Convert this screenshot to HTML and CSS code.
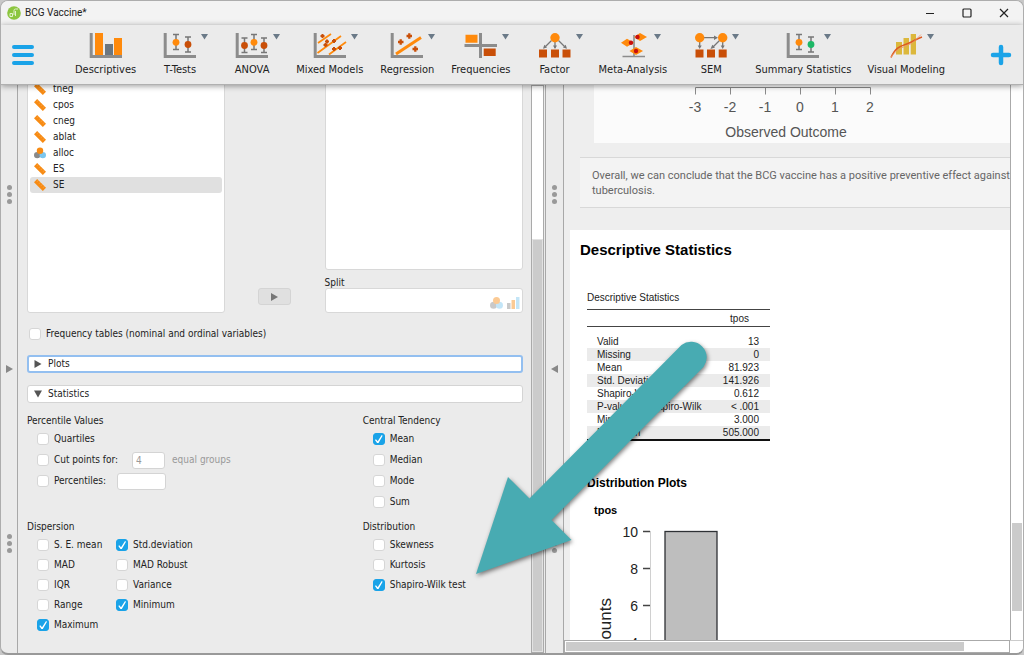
FILE: index.html
```html
<!DOCTYPE html>
<html lang="en">
<head>
<meta charset="utf-8">
<title>BCG Vaccine*</title>
<link rel="stylesheet" href="styles.css">
</head>
<body>
<svg class="defs" aria-hidden="true">
  <symbol id="drop" viewBox="0 0 56 26"><path d="M49 1h7l-3.500 5.500z" fill="#6b7a88"/></symbol>
  <symbol id="axes" viewBox="0 0 56 26"><path d="M13.200 0v23.500H44" fill="none" stroke="#8c8c8c" stroke-width="3"/></symbol>
  <symbol id="ruler" viewBox="0 0 12 12"><path d="M3.200 0L12 8.800 8.800 12 0 3.200z" fill="#f78b14"/><path d="M4.500 1.300L3.300 2.500M6.500 3.300L5.300 4.500M8.500 5.300L7.300 6.500M10.500 7.300L9.300 8.500" stroke="#ffc27a" stroke-width=".7"/></symbol>
  <symbol id="nominal" viewBox="0 0 13 12"><circle cx="3.500" cy="8.300" r="3.500" fill="#8a8a8a"/><circle cx="9.500" cy="8.300" r="3.500" fill="#7cc6ee"/><circle cx="6.500" cy="3.500" r="3.500" fill="#f78b14"/></symbol>
  <symbol id="ordinal" viewBox="0 0 13 12"><path d="M0 6h3.500v6H0z" fill="#8a8a8a"/><path d="M4.500 3H8v9H4.500z" fill="#f78b14"/><path d="M9 0h3.500v12H9z" fill="#7cc6ee"/></symbol>
</svg>
<div class="window">
  <header class="titlebar">
    <svg class="logo" viewBox="0 0 14 14" aria-hidden="true"><circle cx="7" cy="7" r="6.800" fill="#8cc63f"/><path d="M7 9V4.500q0-1.500 1.500-1.500H11M3 7.500h2.500v3H3zM8.500 5v5" fill="none" stroke="#e3f3cd" stroke-width="1"/></svg>
    <h1 class="title">BCG Vaccine*</h1>
    <div class="controls">
      <button aria-label="Minimize"><svg viewBox="0 0 10 10"><path d="M1 5.500h8"/></svg></button>
      <button aria-label="Maximize"><svg viewBox="0 0 10 10"><rect x="1" y="1" width="8" height="8" rx="1"/></svg></button>
      <button aria-label="Close"><svg viewBox="0 0 10 10"><path d="M1 1l8 8M9 1l-8 8"/></svg></button>
    </div>
  </header>
  <nav class="ribbon">
    <button class="menu" aria-label="Menu"><svg viewBox="0 0 22 22"><path d="M2 3h18M2 11h18M2 19h18" stroke="#1aa3e8" stroke-width="4" stroke-linecap="round"/></svg></button>
    <div class="modules">
      <button class="module"><svg viewBox="0 0 56 26"><use href="#axes"/><path d="M17 0h8v22h-8zM36 5h8v17h-8z" fill="#ff8a0c"/><path d="M27 11h8v11h-8z" fill="#6b7680"/></svg><span>Descriptives</span></button>
      <button class="module"><svg viewBox="0 0 56 26"><use href="#axes"/><use href="#drop"/><path d="M21 1.500h6M24 1.500v15M21 16.500h6M33 4h6M36 4v15M33 19h6" stroke="#777" stroke-width="1.500"/><circle cx="24" cy="9.300" r="3.400" fill="#ff8a0c"/><circle cx="36" cy="11.500" r="3.400" fill="#c94f08"/></svg><span>T-Tests</span></button>
      <button class="module"><svg viewBox="0 0 56 26"><use href="#axes"/><use href="#drop"/><path d="M17.500 5h6M20.500 5v14.500M17.500 19.500h6M27 1.500h6M30 1.500v15M27 16.500h6M37 5h6M40 5v14.500M37 19.500h6" stroke="#777" stroke-width="1.500"/><circle cx="20.500" cy="12.500" r="3.400" fill="#c94f08"/><circle cx="30" cy="9.300" r="3.400" fill="#ff8a0c"/><circle cx="40" cy="12.500" r="3.400" fill="#c94f08"/></svg><span>ANOVA</span></button>
      <button class="module"><svg viewBox="0 0 56 26"><use href="#axes"/><use href="#drop"/><path d="M16 10L29 1M15.500 20L39 3M27 21.500L44 9" stroke="#ff8a0c" stroke-width="1.800"/><path d="M18.500 3h4M20.500 1v4M23 8.500h4M25 6.500v4M30 8h4M32 6v4M21.500 12h4M23.500 10v4M30 16h4M32 14v4M36 15h4M38 13v4" stroke="#c94f08" stroke-width="2"/></svg><span>Mixed Models</span></button>
      <button class="module"><svg viewBox="0 0 56 26"><use href="#axes"/><use href="#drop"/><path d="M17 21L42 4.500" stroke="#ff8a0c" stroke-width="3"/><path d="M19 9h5.500M21.700 6.300v5.500M27.500 3H33M30.300.3v5.500M33.500 16H39M36.300 13.300v5.500" stroke="#c94f08" stroke-width="2.300"/></svg><span>Regression</span></button>
      <button class="module"><svg viewBox="0 0 56 26"><use href="#drop"/><path d="M27.500 0v25M11.500 12.500h32.500" stroke="#8c8c8c" stroke-width="3"/><path d="M12.500 1.700h12v8h-12z" fill="#ff8a0c"/><path d="M30.700 15.500h12v7.500h-12z" fill="#c94f08"/></svg><span>Frequencies</span></button>
      <button class="module"><svg viewBox="0 0 56 26"><use href="#drop"/><path d="M28 9v6M24.500 7.500l-6 6M31.500 7.500l6 6" stroke="#777" stroke-width="1.300"/><path d="M26 12.500h4l-2 3.500zM16 15.800l1.300-4 2.700 2.700zM40 15.800l-1.300-4-2.700 2.700z" fill="#777"/><circle cx="28" cy="4.700" r="4.700" fill="#ff8a0c"/><path d="M12 16.500h8v8h-8zM24 16.500h8v8h-8zM35.500 16.500h8v8h-8z" fill="#c94f08"/></svg><span>Factor</span></button>
      <button class="module"><svg viewBox="0 0 56 26"><use href="#drop"/><path d="M29 2v21M17.500 23.500H40" stroke="#8c8c8c" stroke-width="1.600"/><path d="M29 4l6-4 7 4-7 4zM16 9.700l6-4 7 4-7 4zM24.500 18l6.500-4 7 4-7 4z" fill="#ff8a0c"/><circle cx="32.500" cy="4" r="2.200" fill="#c80f0f"/><circle cx="26" cy="9.700" r="2.200" fill="#c80f0f"/><circle cx="31" cy="18" r="2.200" fill="#c80f0f"/></svg><span>Meta-Analysis</span></button>
      <button class="module"><svg viewBox="0 0 56 26"><use href="#drop"/><path d="M21 4.700h11M16.700 9v4M39.700 9v4M36.500 7.500L30 14" stroke="#777" stroke-width="1.300"/><path d="M31 2.500l4 2.200-4 2.200zM14.700 12.500h4l-2 3.500zM37.700 12.500h4l-2 3.500zM27.500 16l1.800-4.200 2.700 2.700z" fill="#777"/><circle cx="16.700" cy="4.700" r="4.700" fill="#ff8a0c"/><circle cx="39.700" cy="4.700" r="4.700" fill="#ff8a0c"/><path d="M12.500 16.500h8v8h-8zM24 16.500h8v8h-8zM35.700 16.500h8v8h-8z" fill="#c94f08"/></svg><span>SEM</span></button>
      <button class="module"><svg viewBox="0 0 56 26"><use href="#axes"/><use href="#drop"/><path d="M21 1.500h6M24 1.500v15M21 16.500h6M33 4h6M36 4v15M33 19h6" stroke="#777" stroke-width="1.500"/><circle cx="24" cy="9.300" r="3.400" fill="#ff8a0c"/><circle cx="36" cy="11.500" r="3.400" fill="#1db866"/></svg><span>Summary Statistics</span></button>
      <button class="module"><svg viewBox="0 0 56 26"><use href="#drop"/><path d="M18 9h6v12.500h-6zM25.500 5H31v16.500h-5.500zM32.700 1H38v20.500h-5.300z" fill="#dcb83c"/><path d="M13 24.500C18 13 24 13 30 10.500S38 6 44 4" fill="none" stroke="#dd5a22" stroke-width="1.500"/><path d="M13 24C20 14 28 14 35 9.500L43 1.500" fill="none" stroke="#ee9a6a" stroke-width=".8"/></svg><span>Visual Modeling</span></button>
    </div>
    <button class="menu" aria-label="Add module"><svg viewBox="0 0 22 22"><path d="M3 11h16M11 3v16" stroke="#1aa3e8" stroke-width="4.500" stroke-linecap="round"/></svg></button>
  </nav>

  <main class="work">
    <div class="gutter">
      <span class="dots dots-top"><i></i><i></i><i></i></span>
      <svg class="fold" viewBox="0 0 7 8"><path d="M0 0l7 4-7 4z"/></svg>
      <span class="dots dots-low"><i></i><i></i><i></i></span>
    </div>

    <form class="form">
      <div class="variables">
        <ul class="list source">
          <li><svg><use href="#ruler"/></svg>tneg</li>
          <li><svg><use href="#ruler"/></svg>cpos</li>
          <li><svg><use href="#ruler"/></svg>cneg</li>
          <li><svg><use href="#ruler"/></svg>ablat</li>
          <li><svg><use href="#nominal"/></svg>alloc</li>
          <li><svg><use href="#ruler"/></svg>ES</li>
          <li class="selected"><svg><use href="#ruler"/></svg>SE</li>
        </ul>
        <div class="transfer"><button type="button" aria-label="Move to Split"><svg viewBox="0 0 7 8"><path d="M0 0l7 4-7 4z"/></svg></button></div>
        <div class="targets">
          <div class="list target"></div>
          <span class="split-label">Split</span>
          <div class="list split"><svg><use href="#nominal"/></svg><svg><use href="#ordinal"/></svg></div>
        </div>
      </div>
      <label class="check frequency"><input type="checkbox">Frequency tables (nominal and ordinal variables)</label>
      <button type="button" class="section focused"><svg viewBox="0 0 8 8"><path d="M0.500 0l7 4-7 4z"/></svg>Plots</button>
      <button type="button" class="section"><svg viewBox="0 0 8 8"><path d="M0 0.500h8l-4 7z"/></svg>Statistics</button>
      <div class="statistics">
        <section class="group upper">
          <h2>Percentile Values</h2>
          <div class="rows">
            <label class="check"><input type="checkbox">Quartiles</label>
            <div class="row"><label class="check"><input type="checkbox">Cut points for:</label><input class="field short" type="text" value="4" aria-label="Number of groups" disabled><span class="muted">equal groups</span></div>
            <div class="row"><label class="check"><input type="checkbox">Percentiles:</label><input class="field" type="text" aria-label="Percentiles"></div>
          </div>
        </section>
        <section class="group upper">
          <h2>Central Tendency</h2>
          <div class="rows">
            <label class="check"><input type="checkbox" checked>Mean</label>
            <label class="check"><input type="checkbox">Median</label>
            <label class="check"><input type="checkbox">Mode</label>
            <label class="check"><input type="checkbox">Sum</label>
          </div>
        </section>
        <section class="group">
          <h2>Dispersion</h2>
          <div class="rows pairs">
            <label class="check"><input type="checkbox">S. E. mean</label>
            <label class="check"><input type="checkbox" checked>Std.deviation</label>
            <label class="check"><input type="checkbox">MAD</label>
            <label class="check"><input type="checkbox">MAD Robust</label>
            <label class="check"><input type="checkbox">IQR</label>
            <label class="check"><input type="checkbox">Variance</label>
            <label class="check"><input type="checkbox">Range</label>
            <label class="check"><input type="checkbox" checked>Minimum</label>
            <label class="check"><input type="checkbox" checked>Maximum</label>
          </div>
        </section>
        <section class="group">
          <h2>Distribution</h2>
          <div class="rows">
            <label class="check"><input type="checkbox">Skewness</label>
            <label class="check"><input type="checkbox">Kurtosis</label>
            <label class="check"><input type="checkbox" checked>Shapiro-Wilk test</label>
          </div>
        </section>
      </div>
    </form>
    <div class="scroll form-scroll"><div class="thumb"></div></div>

    <div class="gutter middle">
      <span class="dots dots-top"><i></i><i></i><i></i></span>
      <svg class="fold" viewBox="0 0 7 8"><path d="M7 0L0 4l7 4z"/></svg>
      <span class="dots dots-low"><i></i><i></i><i></i></span>
    </div>

    <div class="results-frame">
      <article class="results">
        <div class="forest">
          <svg viewBox="0 0 417 58">
            <path d="M101.500 2.500h175M101.500 2.500v7M136.500 2.500v7M171.500 2.500v7M206.500 2.500v7M241.500 2.500v7M276.500 2.500v7" fill="none" stroke="#8a8a8a"/>
            <g text-anchor="middle"><text x="101" y="27">-3</text><text x="136" y="27">-2</text><text x="171" y="27">-1</text><text x="206" y="27">0</text><text x="241" y="27">1</text><text x="276" y="27">2</text><text x="192" y="52">Observed Outcome</text></g>
          </svg>
        </div>
        <p class="note">Overall, we can conclude that the BCG vaccine has a positive preventive effect against tuberculosis.</p>
        <section class="card">
          <h2>Descriptive Statistics</h2>
          <table>
            <caption>Descriptive Statistics</caption>
            <thead><tr><th></th><th scope="col">tpos</th></tr></thead>
            <tbody>
              <tr class="spacer"><td></td><td></td></tr>
              <tr><td>Valid</td><td>13</td></tr>
              <tr class="band"><td>Missing</td><td>0</td></tr>
              <tr><td>Mean</td><td>81.923</td></tr>
              <tr class="band"><td>Std. Deviation</td><td>141.926</td></tr>
              <tr><td>Shapiro-Wilk</td><td>0.612</td></tr>
              <tr class="band"><td>P-value of Shapiro-Wilk</td><td>&lt; .001</td></tr>
              <tr><td>Minimum</td><td>3.000</td></tr>
              <tr class="band"><td>Maximum</td><td>505.000</td></tr>
            </tbody>
          </table>
          <h3>Distribution Plots</h3>
          <h4>tpos</h4>
          <svg class="histogram" viewBox="0 0 180 140">
            <path d="M63.500 11v129" stroke="#d0d0d0"/>
            <path d="M56 11.500h7M56 48.500h7M56 85.500h7M56 122.500h7" stroke="#444" stroke-width="1.500"/>
            <rect x="78" y="11.500" width="52" height="150" fill="#bebebe" stroke="#2e3135" stroke-width="1.300"/>
            <g text-anchor="end"><text x="51" y="17">10</text><text x="51" y="54">8</text><text x="51" y="91">6</text><text x="51" y="128">4</text></g>
            <text class="axis-title" text-anchor="end" transform="translate(24 78) rotate(-90)">Counts</text>
          </svg>
        </section>
      </article>
      <div class="scroll vertical"><div class="thumb"></div></div>
      <div class="scroll horizontal"><div class="thumb"></div></div>
      <div class="corner"></div>
    </div>
  </main>
  <svg class="pointer" viewBox="0 0 240 240" aria-hidden="true"><path d="M6 234L38 137 59.500 158.500 211.500 5A15.700 15.700 0 0 1 233.500 27L81.500 180 101.500 200z" fill="#48abb2"/></svg>
</div>
</body>
</html>
```
FILE: styles.css
```css
* { box-sizing: border-box; }
html { background: #c8c8c8; }
body {
  margin: 0;
  font: 10px/14px "DejaVu Sans Condensed", "DejaVu Sans", sans-serif;
  color: #222;
}
h1, h2, h3, h4, p, ul { margin: 0; padding: 0; }
button { font: inherit; color: inherit; border: 0; padding: 0; background: none; }
svg { display: block; overflow: visible; }
.defs { position: absolute; width: 0; height: 0; }

.window {
  position: relative;
  display: flex;
  flex-direction: column;
  height: 100vh;
  border: 1px solid #adadad;
  border-bottom: 2px solid #999;
  border-radius: 8px;
  overflow: hidden;
  background: #ebebeb;
}

.titlebar {
  display: flex;
  align-items: center;
  flex: none;
  height: 24px;
  padding: 0 14px 0 6px;
  background: #f3f3f3;
}
.logo { width: 14px; height: 14px; }
.title { margin-left: 4px; font: 10px/14px Roboto, sans-serif; color: #222; }
.controls { display: flex; gap: 27px; margin-left: auto; }
.controls svg { width: 10px; height: 10px; fill: none; stroke: #222; stroke-width: 1.2; }

.ribbon {
  position: relative;
  z-index: 2;
  display: flex;
  align-items: center;
  flex: none;
  height: 60px;
  padding: 0 11px;
  border-bottom: 1px solid #b0b0b0;
  box-shadow: 0 1px 6px rgba(0, 0, 0, 0.4);
  background: #ebebeb;
}
.menu svg { width: 22px; height: 22px; }
.modules { display: flex; flex: 1; gap: 16px; margin-left: 41px; }
.module {
  display: flex;
  flex-direction: column;
  align-items: center;
  gap: 4px;
  min-width: 56px;
  font-size: 11px;
  white-space: nowrap;
}
.module svg { width: 56px; height: 26px; }

.work { display: flex; flex: 1; min-height: 0; }
.gutter {
  display: flex;
  flex-direction: column;
  align-items: center;
  flex: none;
  width: 17px;
  border-right: 1px solid #a8a8a8;
}
.middle { width: 19px; border-left: 1px solid #a8a8a8; margin-left: 1px; }
.dots { display: flex; flex-direction: column; gap: 2px; }
.dots i { width: 5px; height: 5px; border-radius: 50%; background: #999; }
.dots-top { margin-top: 100px; }
.fold { width: 7px; height: 8px; margin: 161px 0; fill: #888; }

.form { flex: 496; min-width: 0; padding: 0 8px 0 9px; overflow: hidden; }
.variables { display: grid; grid-template-columns: 2fr 1fr 2fr; height: 228px; }
.list {
  border: 1px solid #d8d8d8;
  border-radius: 3px;
  background: #fff;
  list-style: none;
}
.source { margin-top: -5px; padding: 0 2px; }
.source li { display: flex; align-items: center; gap: 7px; height: 16px; padding-left: 4px; line-height: 16px; }
.source svg { width: 12px; height: 12px; }
.source .selected { border-radius: 3px; background: #e0e0e0; }
.transfer { display: flex; align-items: flex-end; justify-content: center; padding-bottom: 8px; }
.transfer button {
  display: grid;
  place-items: center;
  width: 33px;
  height: 17px;
  border: 1px solid #d4d4d4;
  border-radius: 3px;
  background: #e0e0e0;
}
.transfer svg { width: 7px; height: 8px; fill: #777; }
.targets { display: flex; flex-direction: column; }
.target { flex: 1; margin-top: -5px; }
.split-label { padding-top: 8px; line-height: 10px; }
.split {
  display: flex;
  align-items: center;
  justify-content: flex-end;
  gap: 4px;
  height: 25px;
  padding: 4px 2px 0;
}
.split svg { width: 13px; height: 12px; opacity: 0.45; }

.check { display: flex; align-items: center; gap: 5px; white-space: nowrap; }
.check input {
  appearance: none;
  display: grid;
  place-items: center;
  flex: none;
  width: 12px;
  height: 12px;
  margin: 0;
  border: 1px solid #d6d6d6;
  border-radius: 3px;
  background: #fff;
}
.check input:checked { border-color: #1aa3e8; background: #1aa3e8; }
.check input:checked::after {
  content: "";
  width: 8px;
  height: 8px;
  background: #fff;
  clip-path: polygon(88% 0, 100% 8%, 48% 100%, 30% 100%, 4% 62%, 16% 52%, 38% 78%);
}
.frequency { margin: 14px 0 14px 2px; }

.section {
  display: flex;
  align-items: center;
  gap: 6px;
  width: 100%;
  height: 18px;
  padding: 0 6px;
  border: 1px solid #d4d4d4;
  border-radius: 3px;
  background: #fff;
}
.section svg { width: 8px; height: 8px; fill: #555; }
.section.focused { margin-bottom: 12px; padding: 0 5px; border: 2px solid #93bff0; }

.statistics { display: grid; grid-template-columns: 335fr 160fr; padding-top: 11px; }
.group h2 { font: inherit; line-height: 14px; }
.upper { min-height: 106px; }
.rows { display: grid; gap: 6px; margin-top: 4px; padding-left: 10px; }
.upper .rows { gap: 7px; }
.rows .check, .row { height: 14px; }
.row { display: flex; align-items: center; }
.pairs { grid-template-columns: 73px auto; justify-content: start; column-gap: 6px; }
.field {
  width: 49px;
  height: 17px;
  margin-left: 11px;
  padding: 0 3px;
  border: 1px solid #d4d4d4;
  border-radius: 3px;
  background: #fff;
  font: inherit;
}
.short { width: 33px; margin-left: 14px; color: #999; }
.muted { margin-left: 7px; color: #999; }

.scroll { border: 1px solid #aaa; background: #fff; }
.thumb { background: #cbcbcb; }
.form-scroll { display: flex; flex: none; align-items: flex-end; width: 13px; }
.form-scroll .thumb { width: 100%; height: 73%; border: 1px solid #e2e2e2; }

.results-frame {
  display: grid;
  flex: 459;
  min-width: 0;
  grid-template-columns: minmax(0, 1fr) 13px;
  grid-template-rows: minmax(0, 1fr) 13px;
}
.results {
  overflow: hidden;
  background: #eee;
  font-family: "Liberation Sans", Arial, sans-serif;
}
.forest { margin-left: 30px; background: #fbfbfb; }
.forest svg { width: 417px; height: 58px; font-size: 14px; fill: #555; }
.note {
  margin: 14px 0 22px 16px;
  padding: 10px 0 9px 12px;
  border: solid #d8d8d8;
  border-width: 1px 0;
  background: #f3f3f3;
  color: #666;
  font-family: Roboto, sans-serif;
  font-size: 11px;
  line-height: 15px;
}
.card { margin-left: 6px; padding: 10px 10px 0; background: #fff; color: #222; }
.card h2 { font-size: 15px; line-height: 20px; color: #000; }
.card table { width: 183px; margin: 31px 0 0 7px; border-collapse: collapse; border-bottom: 2px solid #111; line-height: 13px; }
.card caption { padding-bottom: 5px; text-align: left; line-height: 13px; }
.card thead { border: solid #444; border-width: 1px 0; }
.card th { height: 17px; padding: 0 21px 0 0; font-weight: normal; text-align: right; }
.card td { padding: 0 11px 0 10px; white-space: nowrap; }
.card td:last-child { padding-left: 0; text-align: right; }
.card .spacer td { height: 8px; }
.card .band { background: #ebebeb; }
.card h3 { margin: 35px 0 0 7px; font-size: 12px; line-height: 15px; color: #000; }
.card h4 { margin: 12px 0 0 14px; font-size: 11px; line-height: 15px; color: #000; }
.histogram { width: 180px; height: 140px; margin: 2px 0 0 7px; font-size: 14px; fill: #222; }
.axis-title { font-size: 17px; }

.vertical { display: flex; flex-direction: column; padding: 1px; border-width: 0 0 0 1px; }
.vertical .thumb { height: 88px; margin-top: 437px; }
.horizontal { padding: 1px; }
.horizontal .thumb { width: 90%; height: 100%; }
.corner { border-top: 1px solid #ccc; background: #fff; }

.pointer {
  position: absolute;
  z-index: 3;
  left: 469px;
  top: 339px;
  width: 240px;
  height: 240px;
  filter: drop-shadow(1px 2px 2px rgba(0, 0, 0, 0.5));
  pointer-events: none;
}
```
